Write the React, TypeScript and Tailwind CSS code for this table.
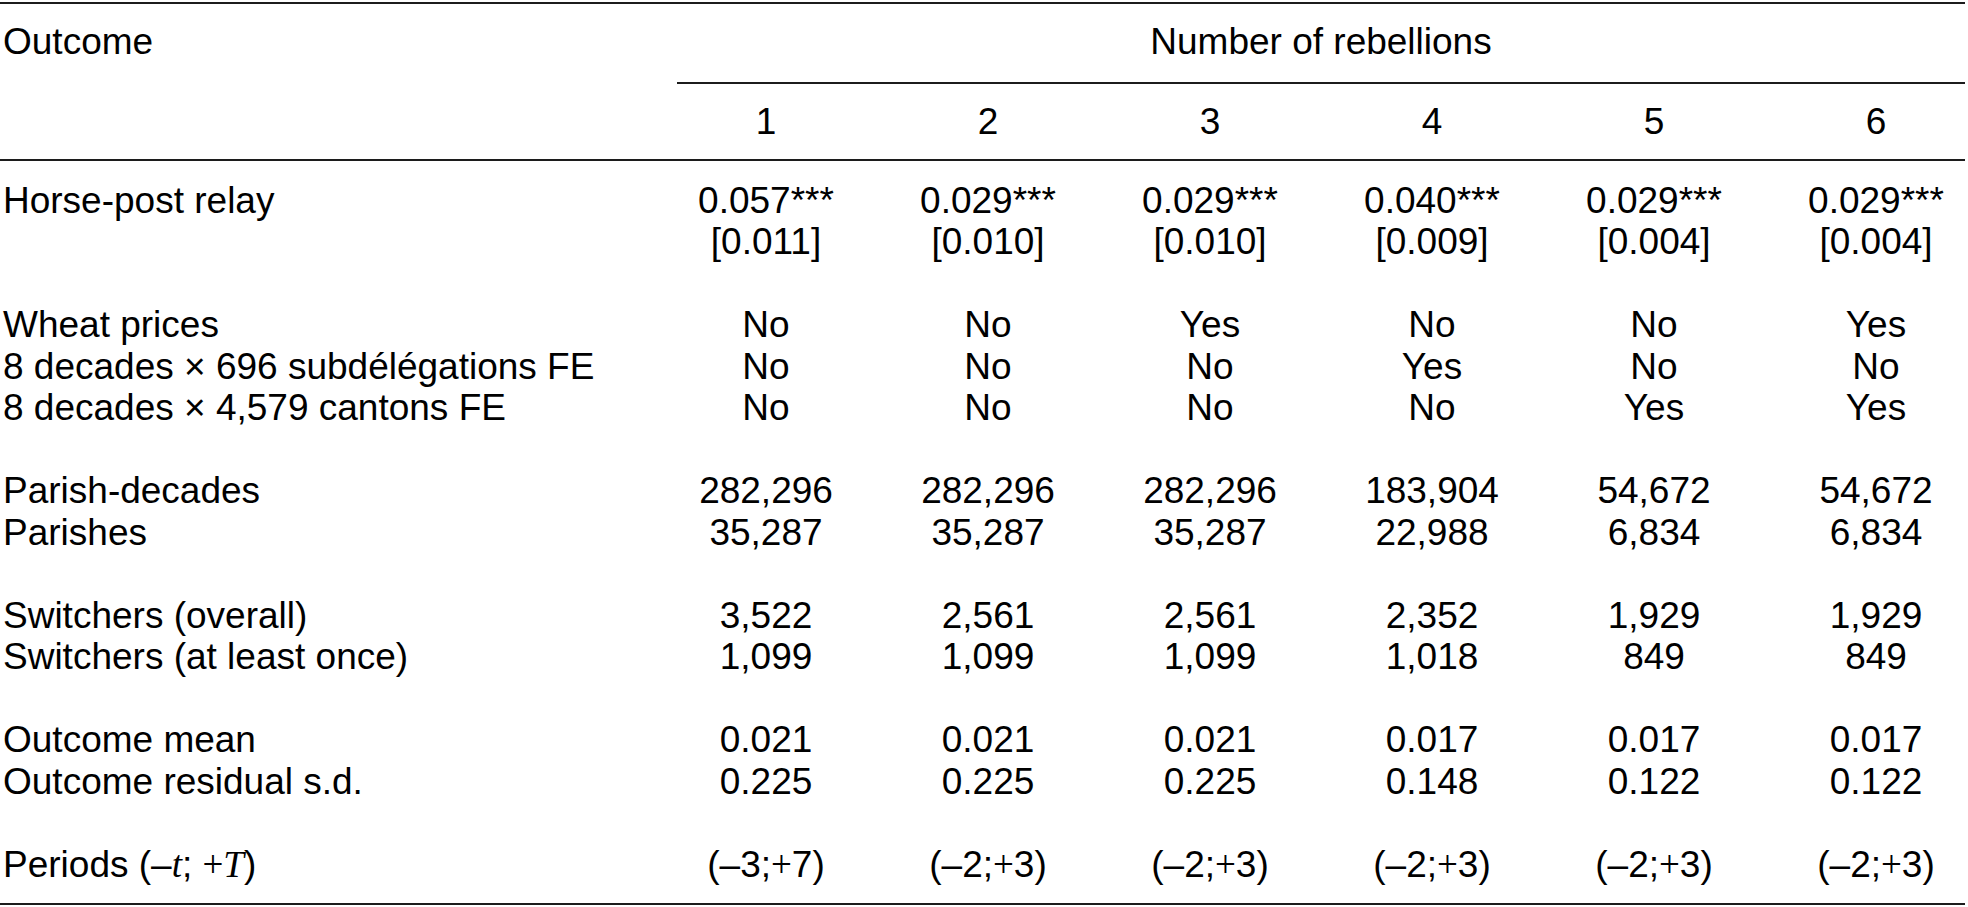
import React from "react";

const grid = "grid grid-cols-[655px_repeat(5,222px)_200px]";

function Plus() {
  return <span className="font-['Liberation_Serif',serif]">+</span>;
}

function Span({ a, b }: { a: string; b: string }) {
  return (
    <>
      (–{a};
      <Plus />
      {b})
    </>
  );
}

type Row = { label: React.ReactNode; values: React.ReactNode[] } | null;

const rows: Row[] = [
  {
    label: "Horse-post relay",
    values: ["0.057***", "0.029***", "0.029***", "0.040***", "0.029***", "0.029***"],
  },
  {
    label: "",
    values: ["[0.011]", "[0.010]", "[0.010]", "[0.009]", "[0.004]", "[0.004]"],
  },
  null,
  { label: "Wheat prices", values: ["No", "No", "Yes", "No", "No", "Yes"] },
  {
    label: "8 decades × 696 subdélégations FE",
    values: ["No", "No", "No", "Yes", "No", "No"],
  },
  {
    label: "8 decades × 4,579 cantons FE",
    values: ["No", "No", "No", "No", "Yes", "Yes"],
  },
  null,
  {
    label: "Parish-decades",
    values: ["282,296", "282,296", "282,296", "183,904", "54,672", "54,672"],
  },
  {
    label: "Parishes",
    values: ["35,287", "35,287", "35,287", "22,988", "6,834", "6,834"],
  },
  null,
  {
    label: "Switchers (overall)",
    values: ["3,522", "2,561", "2,561", "2,352", "1,929", "1,929"],
  },
  {
    label: "Switchers (at least once)",
    values: ["1,099", "1,099", "1,099", "1,018", "849", "849"],
  },
  null,
  {
    label: "Outcome mean",
    values: ["0.021", "0.021", "0.021", "0.017", "0.017", "0.017"],
  },
  {
    label: "Outcome residual s.d.",
    values: ["0.225", "0.225", "0.225", "0.148", "0.122", "0.122"],
  },
  null,
  {
    label: (
      <>
        Periods (–<i className="font-['Liberation_Serif',serif]">t</i>;{" "}
        <Plus />
        <i className="font-['Liberation_Serif',serif]">T</i>)
      </>
    ),
    values: [
      <Span a="3" b="7" />,
      <Span a="2" b="3" />,
      <Span a="2" b="3" />,
      <Span a="2" b="3" />,
      <Span a="2" b="3" />,
      <Span a="2" b="3" />,
    ],
  },
];

function Cell({ i, children }: { i: number; children: React.ReactNode }) {
  return (
    <div className={i === 5 ? "pl-[22px] text-center" : "text-center"}>
      {children}
    </div>
  );
}

export default function App() {
  return (
    <div className="min-h-screen overflow-hidden bg-white text-black">
      <div className="w-[1965px] pt-[2px] font-['Liberation_Sans',Arial,sans-serif] text-[37px] leading-[41.5px] whitespace-nowrap">
        {/* header */}
        <div className="flex border-y-2 border-[#1c1c1c]">
          <div className="w-[655px] pl-[3px] pt-[17px]">Outcome</div>
          <div className="flex-1">
            <div className="pl-[22px]">
              <div className="border-b-2 border-[#1c1c1c] pt-[17px] pb-[19px] text-center">
                Number of rebellions
              </div>
            </div>
            <div className="grid grid-cols-[repeat(5,222px)_200px] pt-[17.5px] pb-[16px]">
              {[1, 2, 3, 4, 5, 6].map((n, i) => (
                <Cell key={n} i={i}>
                  {n}
                </Cell>
              ))}
            </div>
          </div>
        </div>

        {/* body */}
        <div className="border-b-2 border-[#1c1c1c] pt-[19px] pb-[18px]">
          {rows.map((r, k) =>
            r === null ? (
              <div key={k} className="h-[41.5px]" />
            ) : (
              <div key={k} className={grid}>
                <div className="pl-[3px]">{r.label}</div>
                {r.values.map((v, i) => (
                  <Cell key={i} i={i}>
                    {v}
                  </Cell>
                ))}
              </div>
            )
          )}
        </div>
      </div>
    </div>
  );
}
